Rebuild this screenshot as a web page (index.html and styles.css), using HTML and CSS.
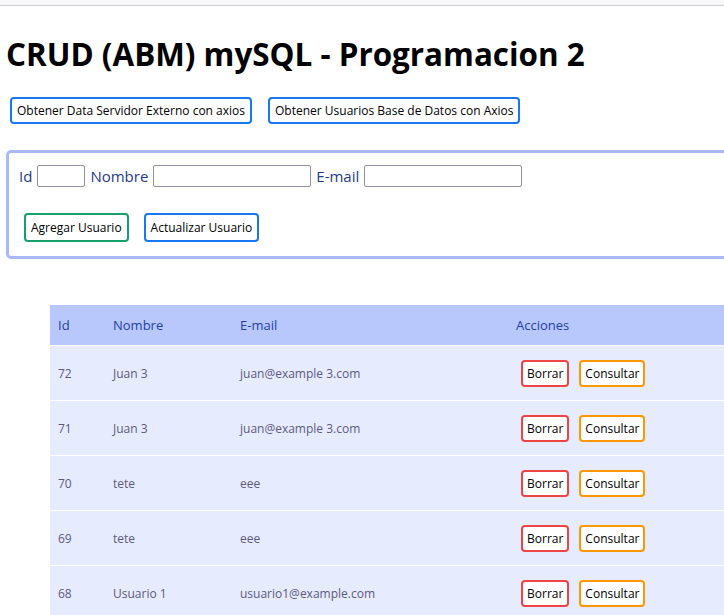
FILE: index.html
```html
<!DOCTYPE html>
<html lang="es">
<head>
<meta charset="utf-8">
<title>CRUD (ABM) mySQL</title>
<link rel="stylesheet" href="styles.css">
</head>
<body>
<div class="topbar"></div>
<div class="page">
  <h1 class="title">CRUD (ABM) mySQL - Programacion 2</h1>
  <div class="actions">
    <button class="btn btn-blue">Obtener Data Servidor Externo con axios</button>
    <button class="btn btn-blue">Obtener Usuarios Base de Datos con Axios</button>
  </div>
  <form class="user-form">
    <div class="fields">
      <label class="lbl">Id</label><input class="inp inp-id" type="text">
      <label class="lbl">Nombre</label><input class="inp inp-wide" type="text">
      <label class="lbl">E-mail</label><input class="inp inp-wide" type="text">
    </div>
    <div class="form-buttons">
      <button type="button" class="btn btn-green">Agregar Usuario</button>
      <button type="button" class="btn btn-blue">Actualizar Usuario</button>
    </div>
  </form>
  <table class="users">
    <thead>
      <tr><th class="c-id">Id</th><th class="c-name">Nombre</th><th class="c-mail">E-mail</th><th class="c-act">Acciones</th></tr>
    </thead>
    <tbody>
      <tr><td>72</td><td>Juan 3</td><td>juan@example 3.com</td><td class="acts"><button class="btn btn-red">Borrar</button><button class="btn btn-orange">Consultar</button></td></tr>
      <tr><td>71</td><td>Juan 3</td><td>juan@example 3.com</td><td class="acts"><button class="btn btn-red">Borrar</button><button class="btn btn-orange">Consultar</button></td></tr>
      <tr><td>70</td><td>tete</td><td>eee</td><td class="acts"><button class="btn btn-red">Borrar</button><button class="btn btn-orange">Consultar</button></td></tr>
      <tr><td>69</td><td>tete</td><td>eee</td><td class="acts"><button class="btn btn-red">Borrar</button><button class="btn btn-orange">Consultar</button></td></tr>
      <tr><td>68</td><td>Usuario 1</td><td>usuario1@example.com</td><td class="acts"><button class="btn btn-red">Borrar</button><button class="btn btn-orange">Consultar</button></td></tr>
    </tbody>
  </table>
</div>
</body>
</html>
```
FILE: styles.css
```css
html, body {
  margin: 0;
  padding: 0;
  background: #ffffff;
  overflow: hidden;
}
body {
  font-family: "Open Sans", "DejaVu Sans", sans-serif;
  width: 724px;
  height: 615px;
}
.topbar {
  height: 5px;
  background: #f8f8fa;
  border-bottom: 1px solid #cfcfd2;
}
.page {
  padding-left: 6px;
  width: 900px;
}
.title {
  font-family: "Open Sans", sans-serif;
  font-weight: 700;
  font-size: 31.4px;
  line-height: 40px;
  margin: 28px 0 0 0;
  color: #000;
}
.actions {
  display: flex;
  gap: 16px;
  margin: 23px 0 0 4px;
}
.btn {
  font-family: "Open Sans", sans-serif;
  font-size: 12px;
  line-height: 17px;
  padding: 3px 5px;
  background: #fff;
  color: #000;
  border: 2px solid #1a73e8;
  border-radius: 4px;
}
.btn-blue { border-color: #1877f2; }
.btn-green { border-color: #16a06b; }
.btn-red { border-color: #ef4444; }
.btn-orange { border-color: #ff9800; }
.user-form {
  margin-top: 26px;
  width: 800px;
  height: 103px;
  border: 3px solid #aab8fc;
  border-radius: 5px;
  padding: 0 0 0 10px;
}
.fields {
  display: flex;
  align-items: center;
  gap: 5px;
  margin-top: 12px;
}
.lbl {
  font-size: 15px;
  color: #1e3a8a;
  line-height: 20px;
}
.inp {
  height: 22px;
  box-sizing: border-box;
  border: 1px solid #8f8f9d;
  border-radius: 2px;
  margin: 0;
  padding: 0;
}
.inp-id { width: 48px; }
.inp-wide { width: 158px; }
.form-buttons {
  display: flex;
  gap: 15px;
  margin: 26px 0 0 5px;
}
.form-buttons .btn { padding: 4px 5px; }
.users {
  margin: 46px 0 0 44px;
  border-collapse: collapse;
  width: 760px;
}
.users th {
  background: #b8c8fc;
  color: #1e3fa8;
  font-weight: 400;
  font-size: 13px;
  text-align: left;
  height: 40px;
  padding: 0 8px;
}
.users td {
  background: #e6ebfd;
  color: #5c5a80;
  font-size: 12px;
  height: 54px;
  padding: 0 8px;
  border-top: 1px solid #fff;
}
.c-id { width: 39px; }
.c-name { width: 111px; }
.c-mail { width: 260px; }
.acts .btn {
  font-size: 12px;
  padding: 3px 4px;
}
.acts .btn-red { margin-left: 5px; margin-right: 10px; }
```
